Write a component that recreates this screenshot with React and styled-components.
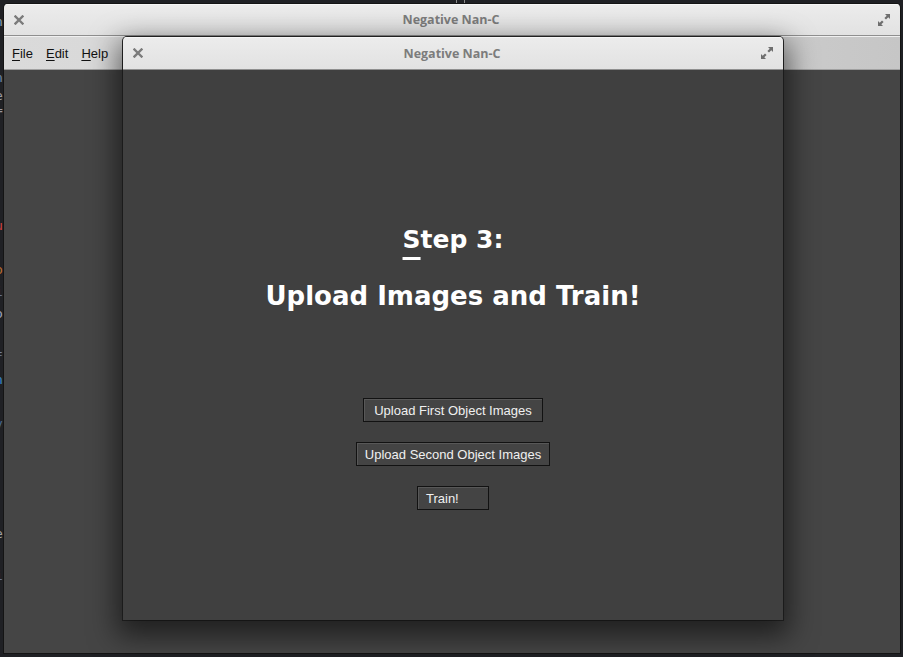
import React from 'react'
import styled, { createGlobalStyle } from 'styled-components'

const Global = createGlobalStyle`
  html, body { margin: 0; padding: 0; background: #1d1e22; }
  body { width: 903px; height: 657px; overflow: hidden; }
`

const CloseIcon = () => (
  <svg width="10" height="10" viewBox="0 0 10 10">
    <path d="M1.5 1.5 L8.5 8.5 M8.5 1.5 L1.5 8.5" stroke="#7b7b7b" strokeWidth="2.4" strokeLinecap="square" />
  </svg>
)

const MaxIcon = () => (
  <svg width="12" height="12" viewBox="0 0 12 12">
    <path d="M7 0 H12 V5 L10.3 3.3 L8 5.6 L6.4 4 L8.7 1.7 Z" fill="#6e6e6e" />
    <path d="M5 12 H0 V7 L1.7 8.7 L4 6.4 L5.6 8 L3.3 10.3 Z" fill="#6e6e6e" />
  </svg>
)

const Screen = styled.div`
  position: relative;
  width: 903px;
  height: 657px;
  overflow: hidden;
  background: #1f2024;
`

const Behind = styled.div`
  position: absolute;
  left: 0;
  top: 0;
  width: 6px;
  height: 657px;
  overflow: hidden;
  font-family: "DejaVu Sans Mono", monospace;
  font-size: 13px;
`

const Frag = styled.span`
  position: absolute;
  left: -5px;
  top: ${p => p.$y}px;
  color: ${p => p.$c};
`

const TopMark = styled.div`
  position: absolute;
  left: 456px;
  top: -4px;
  width: 7px;
  height: 7px;
  border: 1px solid #8a8a8a;
`

const Outer = styled.div`
  position: absolute;
  left: 4px;
  top: 4px;
  width: 896px;
  height: 649px;
  display: flex;
  flex-direction: column;
  background: #444444;
  border-radius: 4px 4px 0 0;
  overflow: hidden;
  box-shadow: 0 0 0 1px #141414;
`

const TitleBar = styled.div`
  height: ${p => p.$h}px;
  flex: none;
  display: flex;
  align-items: center;
  justify-content: space-between;
  padding: 0 ${p => p.$pad}px;
  background: linear-gradient(180deg, #ececec 0%, #e2e2e2 100%);
  border-bottom: 1px solid #8f8f8f;
  box-shadow: inset 0 1px 0 #f6f6f6;
  font-family: "Open Sans", "Noto Sans", sans-serif;
  font-weight: 700;
  font-size: 12.5px;
  color: #7c7c7c;
`

const TitleText = styled.span`
  flex: 1;
  text-align: center;
`

const MenuBar = styled.div`
  height: 32px;
  flex: none;
  display: flex;
  align-items: center;
  gap: 13px;
  padding: 0 8px;
  background: linear-gradient(90deg, #dadada 0%, #d4d4d4 60%, #c6c6c6 100%);
  border-top: 1px solid #f0f0f0;
  border-bottom: 1px solid #a0a0a0;
  font-family: "Liberation Sans", Arial, sans-serif;
  font-size: 13px;
  color: #111;
`

const Mn = styled.span`
  text-decoration: underline;
  text-underline-offset: 2px;
`

const OuterBody = styled.div`
  flex: 1;
  background: #454545;
`

const Dialog = styled.div`
  position: absolute;
  left: 123px;
  top: 37px;
  width: 660px;
  height: 583px;
  display: flex;
  flex-direction: column;
  border-radius: 4px 4px 0 0;
  overflow: hidden;
  background: #404040;
  box-shadow: 0 10px 28px 6px rgba(0, 0, 0, 0.55), 0 0 0 1px #2a2a2a;
`

const Content = styled.div`
  flex: 1;
  display: flex;
  flex-direction: column;
  align-items: center;
  padding-top: 155px;
  background: #404040;
`

const Heading = styled.h1`
  margin: 0;
  font-family: "DejaVu Sans", sans-serif;
  font-weight: 700;
  font-size: ${p => p.$size}px;
  line-height: 30px;
  color: #ffffff;
  margin-bottom: ${p => p.$mb}px;
`

const HeadMn = styled.span`
  text-decoration: underline;
  text-decoration-thickness: 3px;
  text-underline-offset: 9px;
`

const ButtonStack = styled.div`
  display: flex;
  flex-direction: column;
  align-items: center;
  gap: 20px;
  margin-top: 87px;
`

const Btn = styled.button`
  height: 24px;
  min-width: 72px;
  padding: 0 ${p => p.$px}px;
  box-sizing: border-box;
  background: #444444;
  border: 1px solid #121212;
  box-shadow: inset 1px 1px 0 #585858;
  font-family: "Liberation Sans", Arial, sans-serif;
  font-size: 13px;
  color: #f0f0f0;
  text-align: left;
`

export default function App() {
  return (
    <Screen>
      <Global />
      <TopMark />
      <Behind>
        <Frag $y={14} $c="#8aa0b8">n</Frag>
        <Frag $y={70} $c="#6f88a8">n</Frag>
        <Frag $y={88} $c="#9a9aa0">e</Frag>
        <Frag $y={102} $c="#9a9aa0">=</Frag>
        <Frag $y={218} $c="#d04040">u</Frag>
        <Frag $y={262} $c="#c07030">o</Frag>
        <Frag $y={284} $c="#7080a0">i</Frag>
        <Frag $y={306} $c="#a0a8c0">o</Frag>
        <Frag $y={350} $c="#7080a0">f</Frag>
        <Frag $y={372} $c="#3a8ad0">n</Frag>
        <Frag $y={416} $c="#4a6a90">v</Frag>
        <Frag $y={526} $c="#a0a0a0">e</Frag>
        <Frag $y={568} $c="#7080a0">i</Frag>
      </Behind>
      <Outer>
        <TitleBar $h={31} $pad={10}>
          <CloseIcon />
          <TitleText>Negative Nan-C</TitleText>
          <MaxIcon />
        </TitleBar>
        <MenuBar>
          <span><Mn>F</Mn>ile</span>
          <span><Mn>E</Mn>dit</span>
          <span><Mn>H</Mn>elp</span>
        </MenuBar>
        <OuterBody />
      </Outer>
      <Dialog>
        <TitleBar $h={32} $pad={10}>
          <CloseIcon />
          <TitleText>Negative Nan-C</TitleText>
          <MaxIcon />
        </TitleBar>
        <Content>
          <Heading $size={25} $mb={26}><HeadMn>S</HeadMn>tep 3:</Heading>
          <Heading $size={26} $mb={0}>Upload Images and Train!</Heading>
          <ButtonStack>
            <Btn $px={10}>Upload First Object Images</Btn>
            <Btn $px={8}>Upload Second Object Images</Btn>
            <Btn $px={8}>Train!</Btn>
          </ButtonStack>
        </Content>
      </Dialog>
    </Screen>
  )
}
